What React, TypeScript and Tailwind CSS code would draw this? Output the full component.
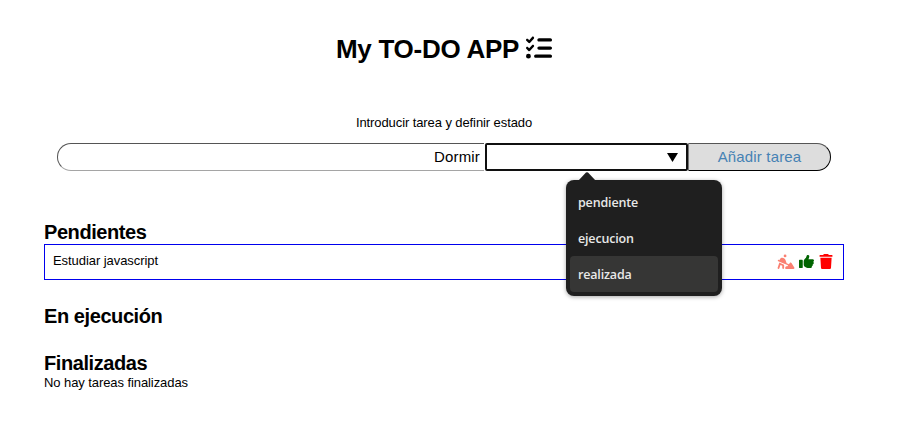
import { FaListCheck, FaPersonDigging, FaThumbsUp, FaTrash } from "react-icons/fa6";

const options = ["pendiente", "ejecucion", "realizada"];

function StatusMenu() {
  return (
    <div className="absolute left-[79px] top-[35px] z-10 w-[156px] h-[116px] rounded-lg bg-[#1f1f1f] p-1 shadow-[0_1px_4px_rgba(0,0,0,0.35)]">
      <svg className="absolute left-[12px] -top-[8px]" width="18" height="9" viewBox="0 0 18 9">
        <path d="M0 9 L8 0.6 Q9 -0.2 10 0.6 L18 9 Z" fill="#1f1f1f" />
      </svg>
      {options.map((o) => (
        <div
          key={o}
          className={`flex h-9 items-center rounded px-2 font-['Open_Sans',sans-serif] text-[12.5px] font-semibold tracking-[-0.16px] text-[#e8e8e8] ${
            o === "realizada" ? "bg-[#363635]" : ""
          }`}
        >
          {o}
        </div>
      ))}
    </div>
  );
}

export default function App() {
  return (
    <main className="h-[448px] w-[907px] bg-white pl-[44px] font-['Liberation_Sans',Arial,sans-serif] text-[13px] leading-[15px] text-black">
      <div className="w-[800px]">
        <h1 className="flex items-center justify-center gap-[7px] pt-[34px] text-[26px] font-bold leading-[30px] tracking-[-0.26px]">
          <span>My TO-DO APP</span>
          <FaListCheck size={26} className="relative -top-px" />
        </h1>
        <p className="mt-[51px] text-center tracking-[-0.09px]">Introducir tarea y definir estado</p>
        <form className="mx-[13px] mt-[13px] flex h-7 text-[15px] tracking-[0.16px]">
          <div className="mr-px flex w-[427px] items-center justify-end rounded-l-[14px] border border-r-0 border-b-[#a5a5a5] border-l-[#555] border-t-[#555] pb-px pr-[4px]">
            Dormir
          </div>
          <div className="relative flex w-[203px] items-center justify-end rounded-[2px] border-2 border-[#101010] pr-[8px]">
            <svg width="11" height="9" viewBox="0 0 11 9">
              <path d="M0 0 H11 L5.5 9 Z" />
            </svg>
            <StatusMenu />
          </div>
          <button
            type="button"
            className="w-[143px] rounded-r-[14px] border border-b-black border-l-[#767676] border-r-black border-t-[#555] bg-[#dddddd] pb-px text-[#4682b4]"
          >
            Añadir tarea
          </button>
        </form>
        <h2 className="mt-[50px] text-[20px] font-bold leading-[23px] tracking-[-0.43px]">Pendientes</h2>
        <div className="flex h-9 justify-between border border-[#0000ee] pl-2 pr-[10px] pt-2">
          <span className="tracking-[-0.06px]">Estudiar javascript</span>
          <div className="flex h-4 items-center gap-1">
            <FaPersonDigging className="h-[15px] w-[18px] text-[#fa8072]" />
            <FaThumbsUp size={15} className="text-[#006400]" />
            <FaTrash className="ml-px h-[15px] w-[14px] text-[#ff0000]" />
          </div>
        </div>
        <h2 className="mt-[25px] text-[20px] font-bold leading-[23px] tracking-[-0.42px]">En ejecución</h2>
        <h2 className="mt-[24px] text-[20px] font-bold leading-[23px] tracking-[-0.43px]">Finalizadas</h2>
        <p className="tracking-[-0.08px]">No hay tareas finalizadas</p>
      </div>
    </main>
  );
}
